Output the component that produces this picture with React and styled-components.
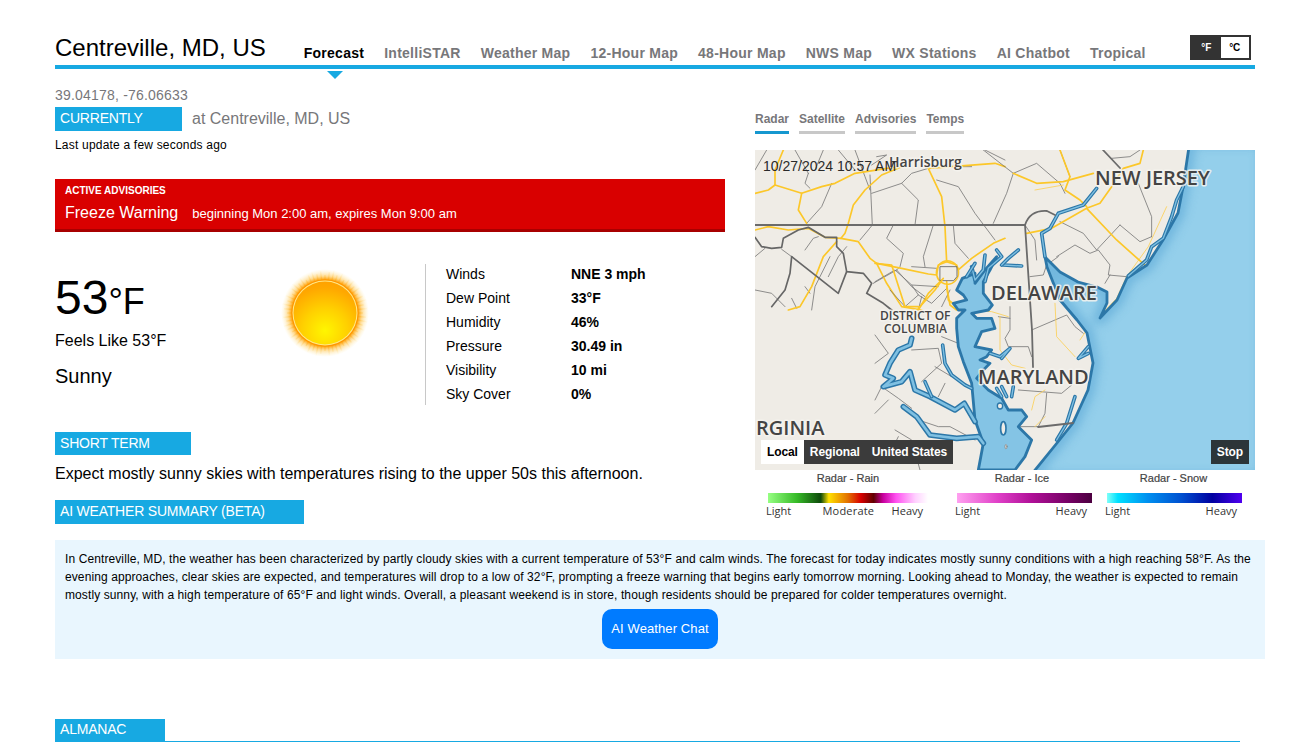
import React from 'react';
import styled, { createGlobalStyle } from 'styled-components';

const GlobalStyle = createGlobalStyle`
	html, body {
		margin: 0;
		padding: 0;
		background: #fff;
		font-family: "Liberation Sans", Arial, sans-serif;
		color: #000;
	}
`;

const Page = styled.div`
	width: 1297px;
	height: 752px;
	overflow: hidden;
	padding: 32px 0 0 55px;
	box-sizing: border-box;
`;

const Header = styled.header`
	position: relative;
	width: 1200px;
	height: 33px;
	display: flex;
	align-items: flex-end;
	border-bottom: 4px solid #17a9e2;
`;

const City = styled.h1`
	margin: 0 38px 3px 0;
	font-size: 24px;
	line-height: 28px;
	font-weight: 400;
	white-space: nowrap;
`;

const Nav = styled.nav`
	display: flex;
	gap: 20px;
	padding-bottom: 4px;
`;

const NavItem = styled.a`
	position: relative;
	font-size: 14px;
	line-height: 16px;
	font-weight: 700;
	letter-spacing: 0.26px;
	white-space: nowrap;
	color: ${(p) => (p.$active ? '#000' : '#77777a')};
	${(p) =>
		p.$active &&
		`&::after {
			content: '';
			position: absolute;
			left: 23px;
			top: 26px;
			border-left: 8px solid transparent;
			border-right: 8px solid transparent;
			border-top: 8px solid #17a9e2;
		}`}
`;

const UnitToggle = styled.div`
	position: absolute;
	right: 4px;
	top: 3px;
	display: flex;
	width: 61px;
	height: 25px;
	box-sizing: border-box;
	border: 2px solid #333;
	background: #fff;
`;

const Unit = styled.span`
	flex: 1;
	display: flex;
	align-items: center;
	justify-content: center;
	font-size: 10px;
	font-weight: 700;
	background: ${(p) => (p.$active ? '#333' : '#fff')};
	color: ${(p) => (p.$active ? '#fff' : '#000')};
`;

const Coords = styled.div`
	margin-top: 18px;
	font-size: 14px;
	line-height: 16px;
	letter-spacing: 0.2px;
	color: #77777a;
`;

const Columns = styled.div`
	display: flex;
	gap: 30px;
	width: 1200px;
	height: 433px;
	margin-top: 4px;
`;

const Left = styled.section`
	width: 670px;
`;

const Right = styled.section`
	width: 500px;
	margin-top: 5px;
`;

const SectionRow = styled.div`
	display: flex;
	align-items: center;
	gap: 10px;
`;

const SectionTag = styled.div`
	width: ${(p) => p.$width}px;
	height: ${(p) => p.$height || 24}px;
	box-sizing: border-box;
	padding-left: 5px;
	background: #17a9e2;
	color: #fff;
	font-size: 14px;
	line-height: ${(p) => (p.$height || 24) - 1}px;
	letter-spacing: -0.2px;
	white-space: nowrap;
`;

const AtPlace = styled.span`
	font-size: 16px;
	color: #77777a;
`;

const Updated = styled.div`
	margin-top: 7px;
	font-size: 12px;
	line-height: 14px;
	letter-spacing: 0.2px;
`;

const Advisory = styled.div`
	margin-top: 27px;
	height: 53px;
	box-sizing: border-box;
	padding: 6px 10px 0;
	background: #d90000;
	border-bottom: 3px solid #a80000;
	color: #fff;
`;

const AdvisoryLabel = styled.div`
	font-size: 10px;
	line-height: 11px;
	font-weight: 700;
`;

const AdvisoryLine = styled.div`
	margin-top: 8px;
	display: flex;
	align-items: baseline;
	gap: 14px;
`;

const AdvisoryName = styled.span`
	font-size: 16px;
`;

const AdvisoryTime = styled.span`
	font-size: 13px;
`;

const Conditions = styled.div`
	margin-top: 32px;
	display: flex;
	height: 141px;
`;

const TempBlock = styled.div`
	width: 220px;
	padding-top: 8px;
`;

const Temp = styled.div`
	font-size: 48px;
	line-height: 52px;
	span {
		font-size: 36px;
	}
`;

const Feels = styled.div`
	margin-top: 4px;
	font-size: 16px;
	line-height: 18px;
`;

const Sky = styled.div`
	margin-top: 15px;
	font-size: 20px;
	line-height: 23px;
`;

const SunBox = styled.div`
	width: 150px;
	svg {
		display: block;
		margin-top: -1px;
	}
`;

const Stats = styled.dl`
	margin: 0;
	padding: 0 0 0 20px;
	border-left: 1px solid #c8c8c8;
	display: grid;
	grid-template-columns: 125px 1fr;
	grid-auto-rows: 24px;
	width: 279px;
`;

const StatName = styled.dt`
	font-size: 14px;
	line-height: 20px;
`;

const StatValue = styled.dd`
	margin: 0;
	font-size: 14px;
	line-height: 20px;
	font-weight: 700;
`;

const ShortTerm = styled.div`
	margin-top: 27px;
`;

const Forecast = styled.p`
	margin: 10px 0 17px;
	font-size: 16px;
	line-height: 18px;
`;

const Tabs = styled.div`
	display: flex;
	gap: 10px;
`;

const Tab = styled.a`
	font-size: 12px;
	line-height: 14px;
	font-weight: 700;
	padding-bottom: 5px;
	color: #77777a;
	border-bottom: 3px solid ${(p) => (p.$active ? '#1597cf' : '#c8c8c8')};
`;

const MapFrame = styled.div`
	position: relative;
	margin-top: 16px;
	width: 500px;
	height: 320px;
	overflow: hidden;
	svg {
		display: block;
	}
`;

const Stamp = styled.div`
	position: absolute;
	left: 8px;
	top: 8px;
	font-size: 14px;
	line-height: 16px;
	color: #2a2a2a;
`;

const MapButtons = styled.div`
	position: absolute;
	left: 6px;
	bottom: 6px;
	display: flex;
`;

const MapButton = styled.div`
	height: 24px;
	line-height: 24px;
	padding: 0 6px;
	font-size: 12px;
	font-weight: 700;
	letter-spacing: -0.1px;
	white-space: nowrap;
	background: ${(p) => (p.$active ? '#fff' : '#3b3b3b')};
	color: ${(p) => (p.$active ? '#000' : '#fff')};
`;

const StopButton = styled(MapButton)`
	position: absolute;
	right: 6px;
	bottom: 6px;
	background: #2c3539;
`;

const Legends = styled.div`
	position: relative;
	height: 62px;
`;

const Legend = styled.div`
	position: absolute;
	left: ${(p) => p.$left}px;
	width: ${(p) => p.$width}px;
	top: 0;
`;

const LegendTitle = styled.div`
	text-align: center;
	font-size: 11px;
	line-height: 16px;
	color: #444;
	-webkit-text-stroke: 0.2px #444;
	margin-bottom: 7px;
	padding-right: ${(p) => p.$shift || 0}px;
`;

const LegendBar = styled.div`
	height: 10px;
	background: ${(p) => p.$bg};
`;

const LegendLabels = styled.div`
	display: flex;
	justify-content: space-between;
	margin: 1px 5px 0 -2px;
	font-family: "Open Sans", sans-serif;
	font-size: 11px;
	line-height: 14px;
	color: #333;
`;

const MidLabel = styled.span`
	margin-left: 14px;
	letter-spacing: 0.2px;
`;

const Summary = styled.div`
	width: 1210px;
	height: 119px;
	box-sizing: border-box;
	padding: 10px 10px 0;
	background: #e9f6fe;
	font-size: 12px;
	line-height: 18px;
	letter-spacing: 0.1px;
`;

const ChatRow = styled.div`
	margin-top: 5px;
	display: flex;
	justify-content: center;
`;

const ChatButton = styled.a`
	width: 116px;
	height: 40px;
	line-height: 40px;
	border-radius: 10px;
	background: #007bff;
	color: #fff;
	text-align: center;
	font-size: 13px;
`;

const Almanac = styled.div`
	margin-top: 60px;
	width: 1185px;
	border-bottom: 1px solid #17a9e2;
`;

const Label = styled.text`
	font-family: "Open Sans", sans-serif;
	font-size: ${(p) => p.$size}px;
	font-weight: 600;
	fill: #444;
	stroke: #f6f4ef;
	stroke-width: 3px;
	stroke-opacity: 0.85;
	paint-order: stroke;
`;

const STATS = [
	['Winds', 'NNE 3 mph'],
	['Dew Point', '33°F'],
	['Humidity', '46%'],
	['Pressure', '30.49 in'],
	['Visibility', '10 mi'],
	['Sky Cover', '0%'],
];

const NAV = ['Forecast', 'IntelliSTAR', 'Weather Map', '12-Hour Map', '48-Hour Map', 'NWS Map', 'WX Stations', 'AI Chatbot', 'Tropical'];

// spiky corona round the sun, lengths just vary by index
const rays = Array.from({ length: 60 }, (_, i) => {
	const a = (i * Math.PI) / 30;
	const r = 38 + ((i * 7) % 5) * 1.6;
	return `M${50 + Math.cos(a) * 33} ${50 + Math.sin(a) * 33}L${50 + Math.cos(a) * r} ${50 + Math.sin(a) * r}`;
}).join('');

const Sun = () => (
	<svg width="100" height="100" viewBox="0 0 100 100">
		<defs>
			<radialGradient id="sunGlow" gradientUnits="userSpaceOnUse" cx="50" cy="50" r="44">
				<stop offset="0.75" stopColor="#ff9c00" />
				<stop offset="0.84" stopColor="#ffc040" stopOpacity="0.55" />
				<stop offset="1" stopColor="#ffe9a0" stopOpacity="0" />
			</radialGradient>
			<radialGradient id="sunFace" cx="0.5" cy="0.78" r="0.8">
				<stop offset="0" stopColor="#fff600" />
				<stop offset="0.45" stopColor="#ffd000" />
				<stop offset="0.85" stopColor="#ffa800" />
				<stop offset="1" stopColor="#ffa000" />
			</radialGradient>
		</defs>
		<circle cx="50" cy="50" r="44" fill="url(#sunGlow)" />
		<path d={rays} stroke="url(#sunGlow)" strokeWidth="1.4" opacity="0.7" />
		<circle cx="50" cy="50" r="33.5" fill="#ff9600" />
		<circle cx="50" cy="50" r="32.5" fill="#ffe98a" />
		<circle cx="50" cy="50" r="31.5" fill="url(#sunFace)" />
	</svg>
);

// map linework, each list is traced in the coordinates of its own group below
const WEST_STATE = [
	'M0 262L20 290L50 295L80 292L85 265L130 240L160 232L210 262L245 262L245 290L265 310L275 365L325 370L350 400L335 430L385 460L410 480',
	'M110 320L250 430L275 365',
	'M110 320L105 370L90 420L50 470',
];

const WEST_GRAY = [
	'M345 75L352 225L340 240L315 270', 'M350 130L440 100L490 150L480 225', 'M535 225L505 320L510 350', 'M595 225L600 280L640 325',
	'M415 225L395 265L445 310L435 350L425 360L470 410L510 440', 'M425 360L355 400', 'M470 350L545 355', 'M230 100L200 170L155 220',
	'M300 0L330 80L345 120', 'M250 0L300 60', 'M160 70L150 100L165 115', 'M205 0L180 60', 'M545 90L610 110L660 190L720 270',
	'M520 55L470 70L440 100', 'M690 0L750 30', 'M605 50L650 50', 'M150 300L175 265L190 260', 'M225 320L180 410L170 480',
	'M275 290L250 320L220 380', 'M0 420L50 430L90 470', 'M0 320L30 295', 'M80 298L110 320', 'M150 410L165 430', 'M110 445L125 475', 'M500 440L490 480',
	'M35 0L0 60', 'M365 20L395 15L350 45', 'M120 0L160 70',
];

const WEST_ROADS = [
	'M0 130L40 120L60 105L140 130L200 110L240 100L300 70L430 50',
	'M85 0L60 60L60 105',
	'M140 130L130 180L155 220',
	'M440 50L380 75L330 120L295 165L280 220L270 250L258 265L210 262L160 235L100 240L40 230L0 240',
	'M258 265L310 275L345 325L365 340L440 355L520 372L545 375L550 345L575 335L605 345L610 360L650 325L715 280L750 265',
	'M575 335L570 230L560 140L520 55L590 50L720 40L750 50',
	'M245 275L205 320L170 410L135 470L100 480',
	'M365 340L395 400L440 470L500 480',
	'M560 390L520 430L490 480',
	'M575 395L580 450L620 480',
];

const NORTH_GRAY = [
	'M930 0L960 80', 'M1170 0L1140 20L1085 25', 'M790 70L860 40L930 100L945 130', 'M930 215L1000 250L1040 300L1110 225', 'M1110 225L1170 275L1205 260',
	'M1205 260L1205 200L1165 100', 'M920 320L975 285L1020 310L1045 300L1080 345L1075 375L1130 380', 'M1080 375L1065 400', 'M840 380L880 375L890 345L925 320',
	'M700 0L790 70L770 130L730 220', 'M825 225L855 270L860 330',
];

const NORTH_ROADS = [
	'M790 70L860 100L940 95L1030 70', 'M930 0L960 80L945 120L990 150L1010 170', 'M1180 0L1170 40L1120 55L1085 110L1050 160L1010 175L905 235L830 250', 'M1010 175L1100 270L1190 350',
];

const NORTH_THIN = ['M855 120L940 105', 'M1250 170L1195 290L1130 380L1100 445L1010 540'];

const NORTH_INLETS = [
	'M1040 115L1000 165L925 190L900 235L875 250L885 320',
	'M1300 110L1280 150L1265 200L1240 265L1205 290L1190 330L1135 378',
];

const MID_GRAY = [
	'M0 95L60 60L110 105L190 110', 'M110 105L130 135L90 170L45 120', 'M130 135L170 160L215 115', 'M0 255L40 310L0 340',
	'M110 300L190 295L200 340L140 395', 'M180 350L230 380', 'M0 450L20 410L70 445L110 475', 'M200 260L250 280', 'M130 510L190 530L225 530L300 570',
	'M60 540L110 570L135 660', 'M0 490L40 450', 'M70 560L30 640', 'M190 440L210 400', 'M225 120L200 170',
	'M405 170L405 240L390 265L400 290L460 290L470 320', 'M470 240L575 195L600 230L625 250', 'M370 200L405 205', 'M430 420L560 430L590 405', 'M515 430L510 490L490 530L430 530',
];

const MID_THIN = ['M540 160L545 260L600 320', 'M375 200L375 300L410 345L450 355', 'M280 180L350 185L400 200', 'M470 480L480 440L510 420', 'M510 500L480 530', 'M615 270L635 240L660 220'];

const MID_ROADS = ['M0 40L50 45L90 170L130 170', 'M205 85L180 120L130 175', 'M245 180L225 165L215 110'];

const CHESAPEAKE = 'M300 100L330 60L365 20L345 60L325 95L325 130L352 165L340 180L290 190L305 205L350 205L360 235L320 245L300 290L350 300L335 320L315 330L345 340L325 360L305 385L340 420L380 445L400 480L440 480L455 500L430 530L470 570L450 620L420 660L310 660L325 580L300 510L290 400L265 335L250 290L245 235L245 205L270 180L250 180L235 160L275 150L265 135L245 120L262 85L300 70Z';

const RIVERS = [
	'M110 265L105 285L70 300L45 340L30 375L55 385L25 410L80 395L105 365L120 420L165 440L240 480L268 460L300 515',
	'M85 470L125 500L165 555L245 565L310 560L325 580',
];

const MID_INLETS = [
	'M150 395L170 440',
	'M203 285L210 340L230 375L270 405L290 415',
	'M385 45L440 48', 'M365 0L380 20L340 55L330 95', 'M430 0L400 25L380 45', 'M330 15L325 60L300 90L290 50', 'M300 40L275 80',
	'M380 325L405 295L375 320L345 310', 'M380 410L395 440', 'M415 410L410 440', 'M365 415L380 440', 'M640 290L610 325L640 310', 'M600 440L575 520L545 570',
];

const OCEAN = 'M435 -10L428 37L423 63L408 90L392 115L372 128L362 150L345 168L352 153L352 142L342 137L323 132L305 122L290 107L292 117L305 150L322 170L332 183L338 213L333 240L318 273L302 293L272 330L510 330L510 -10Z';

const Lines = ({ list, color, width }) => list.map((d) => <path key={d} d={d} stroke={color} strokeWidth={width} />);

const Inlets = ({ list, outer = 11, inner = 4 }) =>
	list.map((d) => (
		<g key={d}>
			<path d={d} stroke="#2c77a8" strokeWidth={outer} />
			<path d={d} stroke="#7fc0e2" strokeWidth={inner} />
		</g>
	));

const RadarMap = () => (
	<svg width="500" height="320" viewBox="0 0 500 320" fill="none" strokeLinejoin="round" strokeLinecap="round">
		<defs>
			<clipPath id="oceanClip">
				<path d={OCEAN} />
			</clipPath>
			<filter id="shoreBlur">
				<feGaussianBlur stdDeviation="5" />
			</filter>
		</defs>
		<rect width="500" height="320" fill="#efece6" />
		<g transform="scale(0.3333)">
			<Lines list={WEST_GRAY} color="#747474" width="2.4" />
			<Lines list={WEST_ROADS} color="#fcc729" width="5" />
			<path d="M545 375a30 32 0 1 1 65 -15a30 32 0 0 1 -65 15" stroke="#fcc729" strokeWidth="4.5" />
			<path d="M556 350H606V380L596 392H556Z" stroke="#666" strokeWidth="2.6" />
		</g>
		<g transform="translate(-5 0) scale(0.3333)">
			<Lines list={NORTH_GRAY} color="#747474" width="2.4" />
			<Lines list={NORTH_THIN} color="#fbd15a" width="2.6" />
			<Lines list={NORTH_ROADS} color="#fcc729" width="5" />
		</g>
		<g transform="translate(120 100) scale(0.3333)">
			<Lines list={MID_GRAY} color="#747474" width="2.4" />
			<Lines list={MID_THIN} color="#fbd15a" width="2.6" />
			<Lines list={MID_ROADS} color="#fcc729" width="5" />
		</g>
		<path d={OCEAN} fill="#94cfeb" />
		<g clipPath="url(#oceanClip)">
			<path d={OCEAN} stroke="#5ba8d6" strokeWidth="14" opacity="0.6" filter="url(#shoreBlur)" />
		</g>
		<path d={OCEAN} stroke="#2c77a8" strokeWidth="2.8" />
		<g transform="translate(-5 0) scale(0.3333)">
			<Inlets list={NORTH_INLETS} />
		</g>
		<g transform="translate(120 100) scale(0.3333)">
			<path d={CHESAPEAKE} fill="#84c4e5" stroke="#2c77a8" strokeWidth="8.5" />
			<Inlets list={RIVERS} outer={17} inner={8} />
			<Inlets list={MID_INLETS} />
			<ellipse cx="375" cy="468" rx="8" ry="9" fill="#efece6" stroke="#2c77a8" strokeWidth="4" />
			<ellipse cx="385" cy="535" rx="8" ry="20" fill="#efece6" stroke="#2c77a8" strokeWidth="5" />
			<ellipse cx="393" cy="590" rx="3" ry="7" fill="#efece6" stroke="#777" strokeWidth="2" />
		</g>
		<path d="M0 75H270Q275 60 292 61L300 65" stroke="#6b6b6b" strokeWidth="1.8" />
		<path d="M270 75L277 180L278 217M283 277L318 273M348 0L365 18" stroke="#6b6b6b" strokeWidth="1.8" />
		<g transform="scale(0.3333)">
			<Lines list={WEST_STATE} color="#666" width="5" />
		</g>
		<Label x="134" y="17" $size={14}>Harrisburg</Label>
		<Label x="340" y="35" $size={20}>NEW JERSEY</Label>
		<Label x="236" y="150" $size={20}>DELAWARE</Label>
		<Label $size={12}>
			<tspan x="125" y="170">DISTRICT OF</tspan>
			<tspan x="129" y="183">COLUMBIA</tspan>
		</Label>
		<Label x="223" y="234" $size={20}>MARYLAND</Label>
		<Label x="1" y="285" $size={20}>RGINIA</Label>
	</svg>
);

const App = () => (
	<Page>
		<GlobalStyle />
		<Header>
			<City>Centreville, MD, US</City>
			<Nav>
				{NAV.map((n, i) => (
					<NavItem key={n} $active={i === 0}>{n}</NavItem>
				))}
			</Nav>
			<UnitToggle>
				<Unit $active>°F</Unit>
				<Unit>°C</Unit>
			</UnitToggle>
		</Header>
		<Coords>39.04178, -76.06633</Coords>
		<Columns>
			<Left>
				<SectionRow>
					<SectionTag $width={127}>CURRENTLY</SectionTag>
					<AtPlace>at Centreville, MD, US</AtPlace>
				</SectionRow>
				<Updated>Last update a few seconds ago</Updated>
				<Advisory>
					<AdvisoryLabel>ACTIVE ADVISORIES</AdvisoryLabel>
					<AdvisoryLine>
						<AdvisoryName>Freeze Warning</AdvisoryName>
						<AdvisoryTime>beginning Mon 2:00 am, expires Mon 9:00 am</AdvisoryTime>
					</AdvisoryLine>
				</Advisory>
				<Conditions>
					<TempBlock>
						<Temp>53<span>°F</span></Temp>
						<Feels>Feels Like 53°F</Feels>
						<Sky>Sunny</Sky>
					</TempBlock>
					<SunBox><Sun /></SunBox>
					<Stats>
						{STATS.map(([name, value]) => (
							<React.Fragment key={name}>
								<StatName>{name}</StatName>
								<StatValue>{value}</StatValue>
							</React.Fragment>
						))}
					</Stats>
				</Conditions>
				<ShortTerm>
					<SectionTag $width={136} $height={23}>SHORT TERM</SectionTag>
					<Forecast>Expect mostly sunny skies with temperatures rising to the upper 50s this afternoon.</Forecast>
					<SectionTag $width={249}>AI WEATHER SUMMARY (BETA)</SectionTag>
				</ShortTerm>
			</Left>
			<Right>
				<Tabs>
					<Tab $active>Radar</Tab>
					<Tab>Satellite</Tab>
					<Tab>Advisories</Tab>
					<Tab>Temps</Tab>
				</Tabs>
				<MapFrame>
					<RadarMap />
					<Stamp>10/27/2024 10:57 AM</Stamp>
					<MapButtons>
						<MapButton $active>Local</MapButton>
						<MapButton>Regional</MapButton>
						<MapButton>United States</MapButton>
					</MapButtons>
					<StopButton>Stop</StopButton>
				</MapFrame>
				<Legends>
					<Legend $left={13} $width={160}>
						<LegendTitle>Radar - Rain</LegendTitle>
						<LegendBar $bg="linear-gradient(90deg,#96ff82,#36bb28 18%,#0e4a0a 33%,#ffe000 38%,#e27000 50%,#d80000 58%,#600000 66%,#c800a0 72%,#ff50f0 80%,#ffd0ff 92%,#fff)" />
						<LegendLabels>
							<span>Light</span><MidLabel>Moderate</MidLabel><span>Heavy</span>
						</LegendLabels>
					</Legend>
					<Legend $left={202} $width={135}>
						<LegendTitle $shift={5}>Radar - Ice</LegendTitle>
						<LegendBar $bg="linear-gradient(90deg,#ffa0f0,#e040c8 30%,#b01098 55%,#700060 85%,#4c0040)" />
						<LegendLabels>
							<span>Light</span><span>Heavy</span>
						</LegendLabels>
					</Legend>
					<Legend $left={352} $width={135}>
						<LegendTitle $shift={2}>Radar - Snow</LegendTitle>
						<LegendBar $bg="linear-gradient(90deg,#80fff8,#00e0ff 8%,#0090f0 30%,#0050d0 55%,#0000a0 78%,#5000f0)" />
						<LegendLabels>
							<span>Light</span><span>Heavy</span>
						</LegendLabels>
					</Legend>
				</Legends>
			</Right>
		</Columns>
		<Summary>
			In Centreville, MD, the weather has been characterized by partly cloudy skies with a current temperature of 53°F and calm winds. The forecast for today indicates mostly sunny conditions with a high reaching 58°F. As the evening approaches, clear skies are expected, and temperatures will drop to a low of 32°F, prompting a freeze warning that begins early tomorrow morning. Looking ahead to Monday, the weather is expected to remain mostly sunny, with a high temperature of 65°F and light winds. Overall, a pleasant weekend is in store, though residents should be prepared for colder temperatures overnight.
			<ChatRow><ChatButton>AI Weather Chat</ChatButton></ChatRow>
		</Summary>
		<Almanac>
			<SectionTag $width={110} $height={22}>ALMANAC</SectionTag>
		</Almanac>
	</Page>
);

export default App;
